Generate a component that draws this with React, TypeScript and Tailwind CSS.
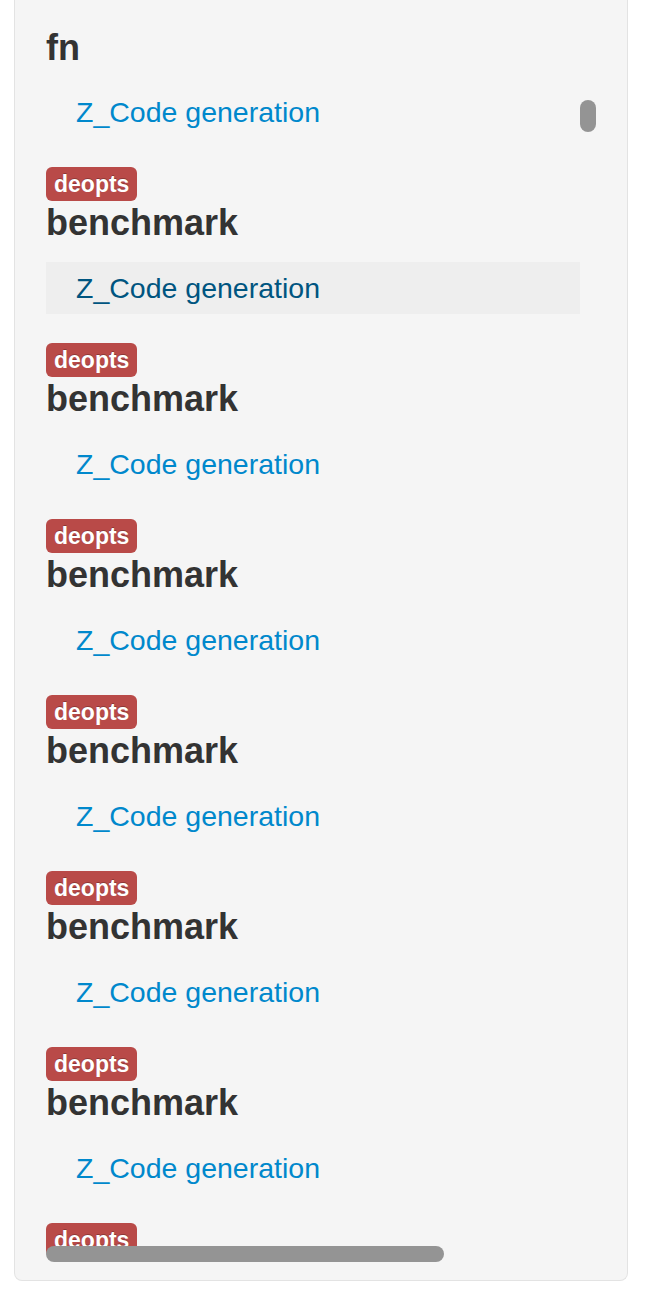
import React from 'react';

const items = Array.from({ length: 7 }, (_, i) => ({ active: i === 0 }));

const Badge = () => (
  <span className="inline-block h-[34px] px-[8px] rounded-[6px] bg-[#b94a48] text-white font-bold text-[23px] leading-[35px] [text-shadow:0_-1px_0_rgba(0,0,0,0.25)]">
    deopts
  </span>
);

const Row = ({ active }: { active?: boolean }) => (
  <a
    className={
      active
        ? 'block w-[534px] h-[52px] pl-[30px] text-[28.5px] leading-[53px] bg-[#eeeeee] text-[#005580]'
        : 'block w-[534px] h-[52px] pl-[30px] text-[28.5px] leading-[53px] text-[#0088cc]'
    }
  >
    Z_Code generation
  </a>
);

export default function App() {
  return (
    <div className="w-[646px] h-[1302px] bg-white overflow-hidden font-['Liberation_Sans',Arial,sans-serif]">
      <div className="relative ml-[14px] w-[614px] h-[1281px] bg-[#f5f5f5] border-x border-b border-[#e3e3e3] rounded-b-[8px]">
        <div className="ml-[31px] w-[552px] h-[1262px] pt-[26px] overflow-hidden">
          <h3 className="text-[36px] leading-[43px] font-bold text-[#333333]">fn</h3>
          <div className="mt-[17px] mb-[29px]">
            <Row />
          </div>
          {items.map((it, i) => (
            <div key={i} className="mb-[29px]">
              <Badge />
              <div className="text-[36px] leading-[43px] font-bold text-[#333333]">benchmark</div>
              <div className="mt-[18px]">
                <Row active={it.active} />
              </div>
            </div>
          ))}
        </div>
        {/* overlay scrollbars */}
        <div className="absolute left-[565px] top-[100px] w-[16px] h-[32px] rounded-full bg-[#949494]" />
        <div className="absolute left-[31px] top-[1246px] w-[398px] h-[16px] rounded-full bg-[#949494]" />
      </div>
    </div>
  );
}
